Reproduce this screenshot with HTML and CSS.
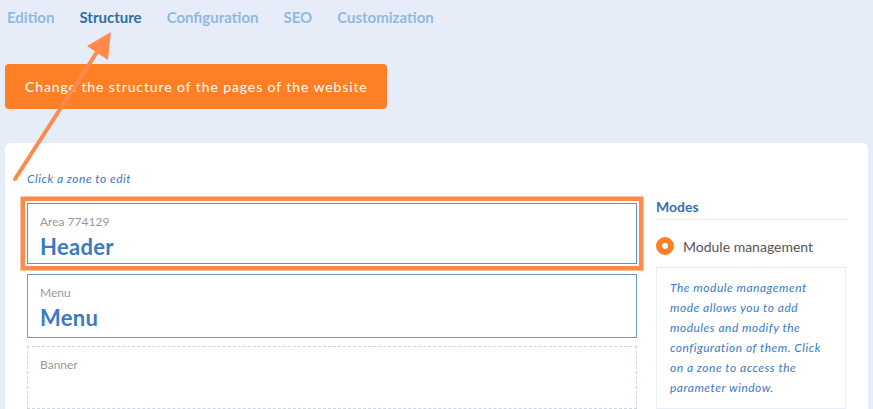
FILE: index.html
```html
<!DOCTYPE html>
<html>
<head>
<meta charset="utf-8">
<link rel="stylesheet" href="styles.css">
</head>
<body>
<div class="page">
  <nav class="tabs">
    <span class="tab">Edition</span>
    <span class="tab active">Structure</span>
    <span class="tab">Configuration</span>
    <span class="tab">SEO</span>
    <span class="tab">Customization</span>
  </nav>
  <div class="tip">Change the structure of the pages of the website</div>
  <section class="card">
    <div class="main">
      <p class="hint">Click a zone to edit</p>
      <div class="zone selected">
        <div class="zone-label">Area 774129</div>
        <div class="zone-title">Header</div>
      </div>
      <div class="zone solid">
        <div class="zone-label">Menu</div>
        <div class="zone-title">Menu</div>
      </div>
      <div class="zone dashed">
        <div class="zone-label">Banner</div>
      </div>
    </div>
    <aside class="modes">
      <h3 class="modes-title">Modes</h3>
      <div class="radio-row"><span class="radio"></span><span>Module management</span></div>
      <div class="info">The module management mode allows you to add modules and modify the configuration of them. Click on a zone to access the parameter window.</div>
    </aside>
  </section>
  <svg class="arrow" width="873" height="409" viewBox="0 0 873 409">
    <line x1="15" y1="179" x2="97" y2="52" stroke="#ff8a4c" stroke-width="4" stroke-linecap="round"/>
    <polygon points="111,32 87,46 108,60" fill="#ff8a4c"/>
  </svg>
</div>
</body>
</html>
```
FILE: styles.css
```css
html, body { margin: 0; padding: 0; }
body {
  background: #e6edf8;
  font-family: Lato, "Open Sans", sans-serif;
  width: 873px;
  height: 409px;
  overflow: hidden;
}
.page { position: relative; height: 409px; }
.tabs {
  display: flex;
  gap: 25px;
  padding: 8px 0 0 7px;
  height: 20px;
}
.tab {
  font-size: 15px;
  font-weight: 700;
  color: #93b8e0;
  line-height: 18px;
}
.tab.active { color: #2f6ea8; }
.tip {
  margin: 36px 0 0 5px;
  width: 382px;
  height: 45px;
  box-sizing: border-box;
  background: #ff7f27;
  border-radius: 4px;
  color: #fff;
  font-size: 14px;
  letter-spacing: 0.9px;
  line-height: 45px;
  padding-left: 20px;
}
.card {
  margin: 34px 5px 0 5px;
  background: #fff;
  border-radius: 6px 6px 0 0;
  height: 266px;
  box-sizing: border-box;
  padding: 29px 20px 0 22px;
  display: grid;
  grid-template-columns: 1fr 192px;
  column-gap: 19px;
}
.hint {
  margin: 0 0 17px 0;
  font-size: 12px;
  letter-spacing: 0.5px;
  font-style: italic;
  color: #3a7bbf;
  line-height: 14px;
}
.zone {
  box-sizing: border-box;
  height: 61px;
  padding: 11px 12px 0 12px;
}
.zone.selected {
  border: 1px solid #5e95c9;
  box-shadow: 0 0 0 2px #fff, 0 0 0 6px #ff8a4c, 0 0 0 7px #ffc3a3;
  margin: 6px 0 10px 0;
}
.zone.solid {
  border: 1px solid #6a9ccf;
  height: 64px;
  margin-bottom: 8px;
}
.zone.dashed {
  border: 1px dashed #c8d8ea;
  height: 63px;
}
.zone-label {
  font-size: 12px;
  color: #999;
  line-height: 14px;
}
.zone-title {
  font-size: 22px;
  letter-spacing: 0.3px;
  font-weight: 700;
  color: #3a7bbf;
  line-height: 26px;
  margin-top: 5px;
}
.modes { padding-top: 26px; }
.modes-title {
  margin: 0;
  font-size: 14px;
  font-weight: 700;
  color: #3471ad;
  line-height: 18px;
  padding-bottom: 3px;
  border-bottom: 1px solid #e8eef8;
}
.radio-row {
  display: flex;
  align-items: center;
  gap: 9px;
  margin-top: 16px;
  font-size: 14px;
  color: #555;
  height: 20px;
}
.radio {
  width: 18px;
  height: 18px;
  box-sizing: border-box;
  border-radius: 50%;
  border: 6px solid #ff7f27;
  background: #fff;
}
.info {
  margin-top: 11px;
  border: 1px solid #e8eef8;
  width: 190px;
  box-sizing: border-box;
  padding: 10px 16px 10px 13px;
  font-size: 12px;
  letter-spacing: 0.5px;
  font-style: italic;
  color: #3a7bbf;
  line-height: 20px;
}
.arrow {
  position: absolute;
  left: 0;
  top: 0;
  pointer-events: none;
}
```
